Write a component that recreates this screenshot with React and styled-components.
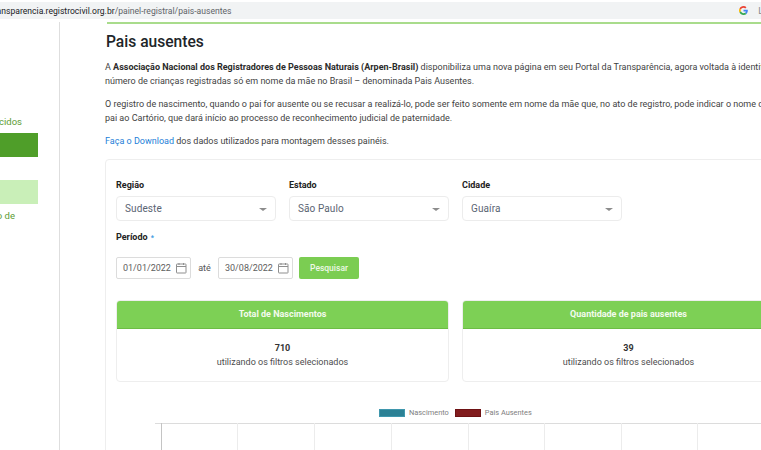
import React from "react";
import styled, { createGlobalStyle } from "styled-components";

const Global = createGlobalStyle`
  html, body { margin: 0; padding: 0; background: #fff; }
  body { width: 761px; height: 450px; overflow: hidden; font-family: Roboto, "Liberation Sans", sans-serif; color: #4a4a4a; }
  * { box-sizing: border-box; }
`;
const Page = styled.div`width:761px;height:450px;overflow:hidden;display:flex;flex-direction:column;`;
const AddressBar = styled.div`
  height:17px;margin-top:2px;background:#f1f3f4;display:flex;align-items:center;justify-content:space-between;
  font-size:8.6px;flex:none;overflow:hidden;
`;
const Url = styled.div`margin-left:-9px;white-space:nowrap;color:#202124;span{color:#5f6368;}`;
const BarIcons = styled.div`display:flex;align-items:center;gap:10px;margin-right:-2px;color:#8a8a8a;font-size:9px;`;
const Body = styled.div`flex:1;display:flex;padding-top:3px;min-height:0;`;
const Sidebar = styled.aside`
  width:60px;flex:none;border-right:1px solid #dedede;padding-top:93px;display:flex;flex-direction:column;padding-right:37px;overflow:hidden;
`;
const SideLink = styled.div`
  height:13px;line-height:13px;font-size:9.5px;color:#5c9c34;white-space:nowrap;display:flex;justify-content:flex-end;
  margin-right:${p=>p.$mr||0}px;margin-top:${p=>p.$mt||0}px;
`;
const SideBlock = styled.div`height:24px;width:38px;flex:none;background:${p=>p.$bg};margin-top:${p=>p.$mt}px;`;
const Main = styled.main`flex:1;min-width:0;padding-left:45px;overflow:hidden;`;
const TopRule = styled.div`height:2px;margin-left:2px;background:#a9dc8c;`;
const Title = styled.h1`margin:7px 0 0 1px;font-size:15.6px;line-height:22px;font-weight:500;color:#212529;`;
const Para = styled.p`margin:${p=>p.$mt}px 0 0;font-size:9px;line-height:13.5px;white-space:nowrap;color:#3f3f3f;b{font-weight:700;color:#2b2b2b;}`;
const Link = styled.a`color:#1d80d8;text-decoration:none;`;
const Card = styled.section`
  margin-top:10px;width:720px;border:1px solid #eeeeee;border-radius:4px 0 0 0;padding:19px 10px 0;
`;
const Filters = styled.div`display:flex;gap:13px;`;
const Field = styled.div`width:160px;flex:none;`;
const Label = styled.label`display:block;font-size:9px;line-height:12px;font-weight:700;color:#222;`;
const Required = styled.span`color:#3b9ae1;font-size:7px;line-height:0;font-weight:700;margin-left:1px;`;
const SelectBox = styled.div`
  margin-top:5px;height:25px;border:1px solid #ececec;border-radius:4px;display:flex;align-items:center;justify-content:space-between;
  padding:0 8px 0 8px;font-size:10px;letter-spacing:.1px;color:#5a6472;
`;
const Caret = styled.i`width:0;height:0;border:4px solid transparent;border-top:3.5px solid #8c8c8c;border-bottom:0;margin-top:2px;`;
const Period = styled.div`margin-top:10px;`;
const DateRow = styled.div`margin-top:14px;display:flex;align-items:center;`;
const DateBox = styled.div`
  width:75px;height:22px;border:1px solid #dcdcdc;border-radius:2px;display:flex;align-items:center;justify-content:space-between;
  padding:0 3px 0 6px;font-size:9px;color:#5e5e5e;flex:none;
`;
const Ate = styled.span`width:27px;text-align:center;font-size:9px;color:#555;flex:none;`;
const Button = styled.button`
  margin-left:6px;width:60px;height:22px;background:#7bcd52;border:0;border-radius:2px;color:#eef9e8;font:500 8.5px Roboto,sans-serif;padding:0;
`;
const Stats = styled.div`margin-top:21px;display:flex;gap:13px;`;
const Stat = styled.div`width:333px;height:82px;flex:none;border:1px solid #eeeeee;border-radius:4px;overflow:hidden;text-align:center;`;
const StatHead = styled.div`height:29px;margin:-1px -1px 0;background:#7dd055;border-bottom:1px solid #6cbd45;color:#f3fbee;font-size:9px;font-weight:700;line-height:29px;`;
const StatValue = styled.div`margin-top:12px;font-size:9px;line-height:14px;font-weight:700;color:#333;`;
const StatNote = styled.div`font-size:9px;line-height:14px;color:#4d4d4d;`;
const Legend = styled.div`margin:25px 0 0 263px;display:flex;align-items:center;height:12px;font-size:7.4px;color:#808080;white-space:nowrap;`;
const Swatch = styled.i`width:26px;height:8px;background:${p=>p.$c};border:1px solid ${p=>p.$b};margin-right:4px;`;
const LegendGap = styled.span`width:6px;`;
const Chart = styled.svg`display:block;margin:4px 0 0 39px;`;

const Cal = () => (
  <svg width="12" height="12" viewBox="0 0 12 12" fill="none" stroke="#8f8f8f" strokeWidth="1">
    <rect x="1.5" y="2" width="9.5" height="9" rx=".5" /><path d="M1.500 4.500h9.500M4 1v2M8.500 1v2" />
  </svg>
);
const GoogleG = () => (
  <svg width="9" height="9" viewBox="0 0 48 48">
    <path fill="#EA4335" d="M24 9.500c3.500 0 6.700 1.300 9.100 3.400l6.800-6.800C35.800 2.400 30.300 0 24 0 14.600 0 6.500 5.400 2.600 13.200l7.900 6.200C12.400 13.600 17.700 9.500 24 9.500z"/>
    <path fill="#4285F4" d="M47 24.500c0-1.600-.2-3.100-.4-4.500H24v9h13c-.6 3-2.200 5.500-4.800 7.200l7.700 6C44.400 37.900 47 31.800 47 24.500z"/>
    <path fill="#FBBC05" d="M10.500 28.600A14.500 14.500 0 0 1 10.500 19.400l-7.900-6.200a24 24 0 0 0 0 21.600z"/>
    <path fill="#34A853" d="M24 48c6.500 0 11.900-2.100 15.900-5.800l-7.700-6c-2.200 1.500-4.900 2.300-8.200 2.300-6.300 0-11.600-4.100-13.500-9.900l-7.900 6.200C6.500 42.600 14.600 48 24 48z"/>
  </svg>
);

const gridX = [6, 82, 159, 236, 313, 389, 466, 542];

const App = () => (
  <Page>
    <Global />
    <AddressBar>
      <Url>transparencia.registrocivil.org.br<span>/painel-registral/pais-ausentes</span></Url>
      <BarIcons><GoogleG /><span>L</span></BarIcons>
    </AddressBar>
    <Body>
      <Sidebar>
        <SideLink>Reconhecidos</SideLink>
        <SideBlock $bg="#4f9e29" $mt={5} />
        <SideBlock $bg="#c9efb8" $mt={23} />
        <SideLink $mr={7} $mt={5}>Registro de</SideLink>
      </Sidebar>
      <Main>
        <TopRule />
        <Title>Pais ausentes</Title>
        <Para $mt={8}>
          A <b>Associação Nacional dos Registradores de Pessoas Naturais (Arpen-Brasil)</b> disponibiliza uma nova página em seu Portal da Transparência, agora voltada à identificação do<br />
          número de crianças registradas só em nome da mãe no Brasil – denominada Pais Ausentes.
        </Para>
        <Para $mt={10}>
          O registro de nascimento, quando o pai for ausente ou se recusar a realizá-lo, pode ser feito somente em nome da mãe que, no ato de registro, pode indicar o nome do<br />
          pai ao Cartório, que dará início ao processo de reconhecimento judicial de paternidade.
        </Para>
        <Para $mt={10}><Link>Faça o Download</Link> dos dados utilizados para montagem desses painéis.</Para>
        <Card>
          <Filters>
            <Field><Label>Região</Label><SelectBox>Sudeste<Caret /></SelectBox></Field>
            <Field><Label>Estado</Label><SelectBox>São Paulo<Caret /></SelectBox></Field>
            <Field><Label>Cidade</Label><SelectBox>Guaíra<Caret /></SelectBox></Field>
          </Filters>
          <Period><Label>Período <Required>*</Required></Label></Period>
          <DateRow>
            <DateBox>01/01/2022<Cal /></DateBox>
            <Ate>até</Ate>
            <DateBox>30/08/2022<Cal /></DateBox>
            <Button>Pesquisar</Button>
          </DateRow>
          <Stats>
            <Stat><StatHead>Total de Nascimentos</StatHead><StatValue>710</StatValue><StatNote>utilizando os filtros selecionados</StatNote></Stat>
            <Stat><StatHead>Quantidade de pais ausentes</StatHead><StatValue>39</StatValue><StatNote>utilizando os filtros selecionados</StatNote></Stat>
          </Stats>
          <Legend>
            <Swatch $c="#2c8195" $b="#3f97ad" />Nascimento<LegendGap />
            <Swatch $c="#821c1e" $b="#6e1214" />Pais Ausentes
          </Legend>
          <Chart width="620" height="30">
            <line x1="0" y1=".5" x2="620" y2=".5" stroke="#dcdcdc" />
            {gridX.map((x, i) => (
              <line key={x} x1={x + .5} y1="0" x2={x + .5} y2="30" stroke={i === 0 ? "#c4c4c4" : "#ececec"} />
            ))}
          </Chart>
        </Card>
      </Main>
    </Body>
  </Page>
);
export default App;
